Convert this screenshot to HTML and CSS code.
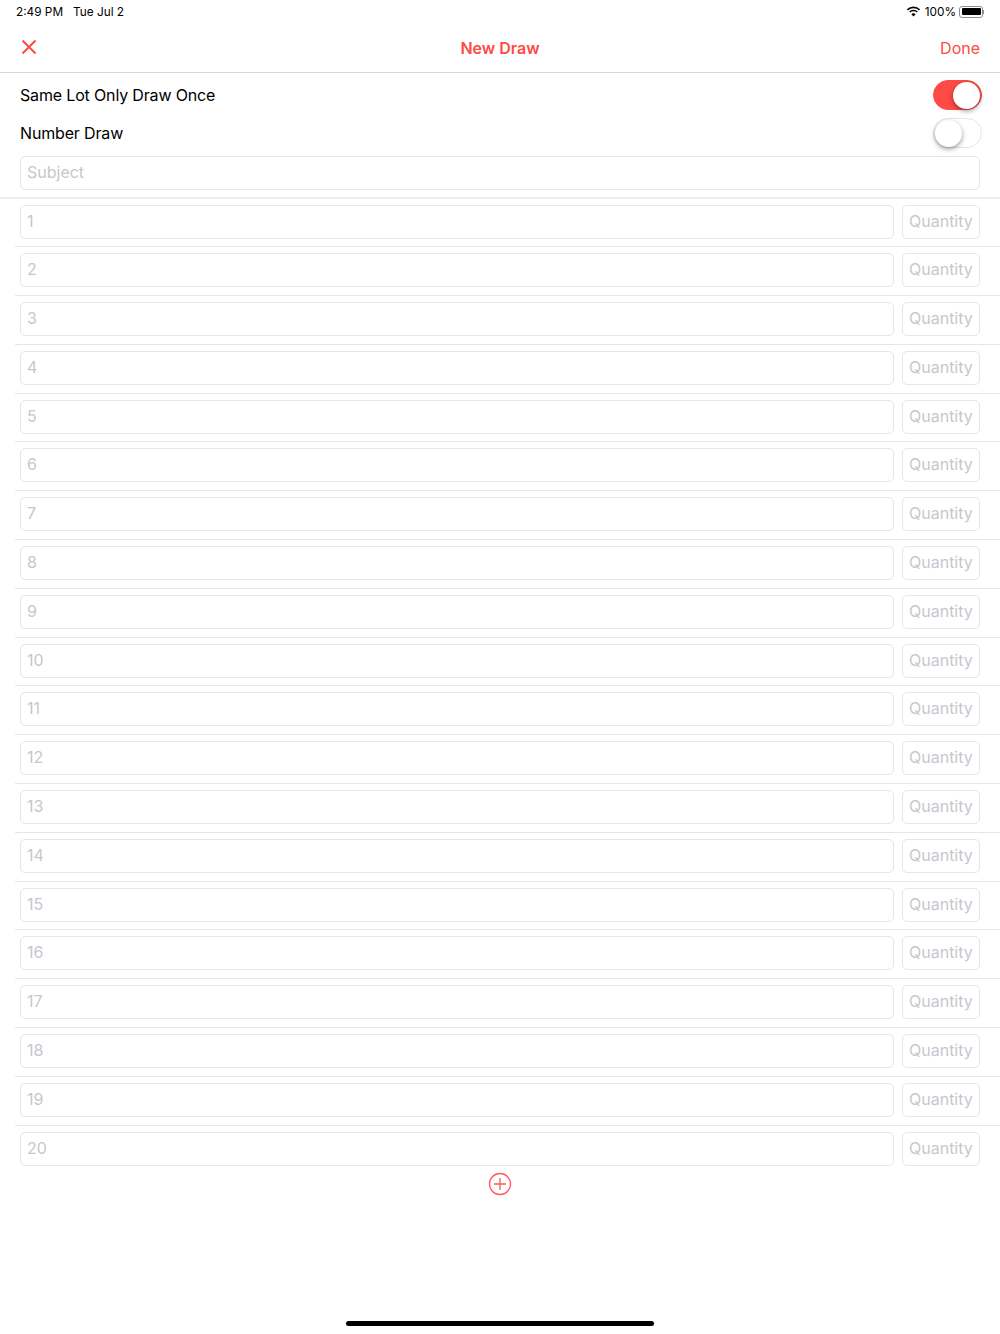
FILE: index.html
```html
<!DOCTYPE html>
<html dir="ltr" lang="en">
  <head>
    <meta charset="utf-8" />
    <meta name="viewport" content="width=device-width, initial-scale=1.0" />
    <title>New Draw</title>
    <link rel="stylesheet" href="styles.css">
  </head>

  <body>
    <div class="status-bar">
      <div class="status-left">
        <span>2:49 PM</span>
        <span>Tue Jul 2</span>
      </div>
      <div class="status-right">
        <svg class="wifi" width="15" height="11" viewBox="0 0 15 11">
          <path d="M7.5 2.2c2.1 0 4 .8 5.5 2.2l1.1-1.2A9.6 9.6 0 0 0 7.5.5 9.6 9.6 0 0 0 .9 3.200l1.100 1.200A8 8 0 0 1 7.500 2.200z" />
          <path d="M7.500 5.300c1.200 0 2.300.5 3.200 1.300l1.100-1.200a6.300 6.300 0 0 0-8.600 0l1.100 1.200c.9-.8 2-1.300 3.200-1.300z" />
          <path d="M7.500 10.500l2.100-2.300a3 3 0 0 0-4.200 0z" />
        </svg>
        <span>100%</span>
        <div class="battery"><div class="battery-level"></div></div>
        <div class="battery-cap"></div>
      </div>
    </div>

    <div class="nav-bar">
      <svg class="close-icon" width="18" height="18" viewBox="0 0 18 18">
        <path d="M2.500 2.500l13 13M15.500 2.500l-13 13" />
      </svg>
      <div class="nav-title">New Draw</div>
      <div class="nav-done">Done</div>
    </div>

    <div class="settings">
      <div class="setting-row">
        <span>Same Lot Only Draw Once</span>
        <div class="switch switch-on"><div class="knob"></div></div>
      </div>
      <div class="setting-row">
        <span>Number Draw</span>
        <div class="switch"><div class="knob"></div></div>
      </div>
      <input class="field subject" placeholder="Subject" />
    </div>

    <div class="lots">
      <div class="lot"><input class="field name" placeholder="1" /><input class="field qty" placeholder="Quantity" /></div>
      <div class="lot"><input class="field name" placeholder="2" /><input class="field qty" placeholder="Quantity" /></div>
      <div class="lot"><input class="field name" placeholder="3" /><input class="field qty" placeholder="Quantity" /></div>
      <div class="lot"><input class="field name" placeholder="4" /><input class="field qty" placeholder="Quantity" /></div>
      <div class="lot"><input class="field name" placeholder="5" /><input class="field qty" placeholder="Quantity" /></div>
      <div class="lot"><input class="field name" placeholder="6" /><input class="field qty" placeholder="Quantity" /></div>
      <div class="lot"><input class="field name" placeholder="7" /><input class="field qty" placeholder="Quantity" /></div>
      <div class="lot"><input class="field name" placeholder="8" /><input class="field qty" placeholder="Quantity" /></div>
      <div class="lot"><input class="field name" placeholder="9" /><input class="field qty" placeholder="Quantity" /></div>
      <div class="lot"><input class="field name" placeholder="10" /><input class="field qty" placeholder="Quantity" /></div>
      <div class="lot"><input class="field name" placeholder="11" /><input class="field qty" placeholder="Quantity" /></div>
      <div class="lot"><input class="field name" placeholder="12" /><input class="field qty" placeholder="Quantity" /></div>
      <div class="lot"><input class="field name" placeholder="13" /><input class="field qty" placeholder="Quantity" /></div>
      <div class="lot"><input class="field name" placeholder="14" /><input class="field qty" placeholder="Quantity" /></div>
      <div class="lot"><input class="field name" placeholder="15" /><input class="field qty" placeholder="Quantity" /></div>
      <div class="lot"><input class="field name" placeholder="16" /><input class="field qty" placeholder="Quantity" /></div>
      <div class="lot"><input class="field name" placeholder="17" /><input class="field qty" placeholder="Quantity" /></div>
      <div class="lot"><input class="field name" placeholder="18" /><input class="field qty" placeholder="Quantity" /></div>
      <div class="lot"><input class="field name" placeholder="19" /><input class="field qty" placeholder="Quantity" /></div>
      <div class="lot"><input class="field name" placeholder="20" /><input class="field qty" placeholder="Quantity" /></div>
    </div>

    <div class="add-row">
      <svg width="24" height="24" viewBox="0 0 24 24">
        <circle cx="12" cy="12" r="10.500" />
        <path d="M12 6v12M6 12h12" />
      </svg>
    </div>

    <div class="home-indicator"></div>
  </body>
</html>
```

FILE: styles.css
```css
* {
  box-sizing: border-box;
}

body {
  margin: 0;
  height: 1334px;
  position: relative;
  overflow: hidden;
  background: #fff;
  color: #000;
  font-family: Inter, "Liberation Sans", sans-serif;
}

.status-bar {
  height: 23px;
  margin-bottom: 1px;
  padding: 0 16px;
  display: flex;
  align-items: center;
  justify-content: space-between;
  font-size: 11.800px;
}

.status-left {
  display: flex;
  gap: 10px;
}

.status-right {
  display: flex;
  align-items: center;
}

.wifi {
  margin-right: 4px;
  fill: #000;
}

.battery {
  width: 24px;
  height: 12px;
  margin-left: 3px;
  padding: 1.500px;
  border: 1px solid #8e8e8e;
  border-radius: 3px;
}

.battery-level {
  height: 100%;
  background: #000;
  border-radius: 1px;
}

.battery-cap {
  width: 1px;
  height: 4px;
  background: #8e8e8e;
}

.nav-bar {
  height: 49px;
  padding: 0 20px;
  display: flex;
  align-items: center;
  justify-content: space-between;
  position: relative;
  border-bottom: 1px solid #d6d6d8;
  color: #ff4a45;
  font-size: 16px;
}

.close-icon {
  margin-bottom: 2px;
  fill: none;
  stroke: #ff4a45;
  stroke-width: 2;
}

.nav-title {
  position: absolute;
  left: 0;
  right: 0;
  text-align: center;
  font-weight: 600;
}

.settings {
  padding: 3px 20px 0;
}

.setting-row {
  height: 38.500px;
  display: flex;
  align-items: center;
  justify-content: space-between;
  font-size: 16px;
  letter-spacing: -0.160px;
}

.setting-row:first-child {
  height: 38px;
}

.switch {
  width: 49px;
  height: 30px;
  margin-right: -2px;
  display: flex;
  padding: 2px;
  border: 1px solid #e6e6e6;
  border-radius: 15px;
  background: #fff;
}

.switch-on {
  justify-content: flex-end;
  background: #ff4a45;
  border-color: #ff4a45;
}

.knob {
  width: 27px;
  height: 27px;
  margin: -1px;
  border-radius: 50%;
  background: #fff;
  box-shadow: 0 2px 5px rgba(0, 0, 0, 0.4);
}

.field {
  height: 34px;
  padding: 0 6px 2px;
  border: 1px solid #e6e6e8;
  border-radius: 5px;
  background: #fff;
  font-family: inherit;
  font-size: 16px;
  outline: none;
}

.field::placeholder {
  color: #c7c7cd;
  opacity: 1;
}

.subject {
  display: block;
  width: 100%;
  margin-top: 3px;
}

.lots {
  margin-top: 7px;
  border-top: 2px solid #ededef;
}

.lot {
  height: 48.800px;
  margin-left: 15px;
  padding: 6px 20px 0 5px;
  display: flex;
  gap: 8px;
  border-bottom: 1px solid #e6e6e8;
}

.lot:last-child {
  border-bottom: none;
}

.name {
  flex: 1;
  min-width: 0;
}

.qty {
  width: 78px;
}

.add-row {
  margin-top: -2px;
  display: flex;
  justify-content: center;
}

.add-row svg {
  fill: none;
  stroke: #ff5a55;
  stroke-width: 1.300;
}

.home-indicator {
  position: absolute;
  left: 346px;
  top: 1321px;
  width: 308px;
  height: 5px;
  border-radius: 3px;
  background: #000;
}
```
